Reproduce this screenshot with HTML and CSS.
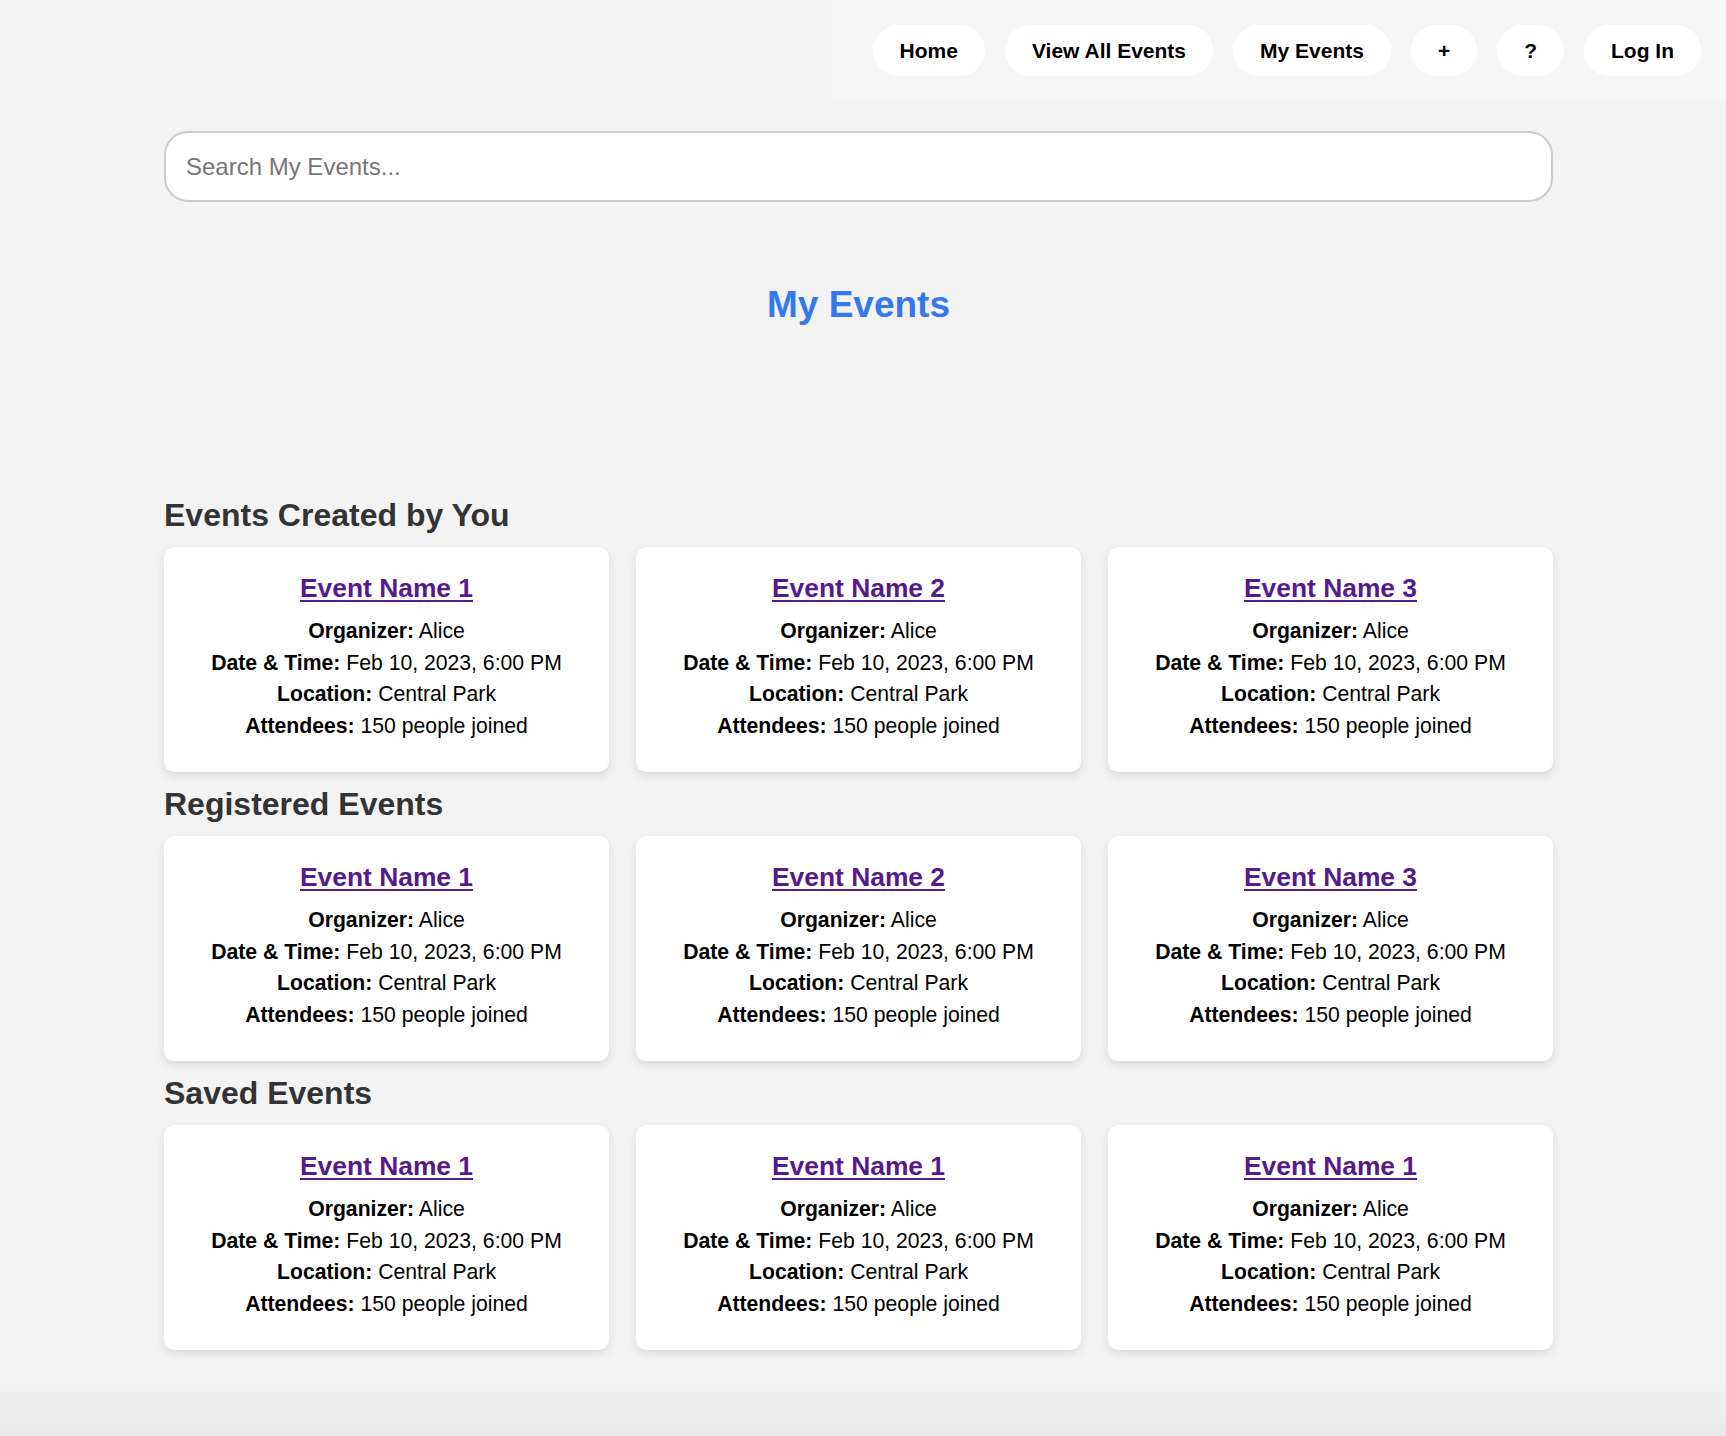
FILE: index.html
```html
<!DOCTYPE html>
<html lang="en">
<head>
<meta charset="utf-8">
<title>My Events</title>
<link rel="stylesheet" href="styles.css">
</head>
<body>
<header class="topbar">
  <nav class="nav">
    <a class="nav-btn" href="#">Home</a>
    <a class="nav-btn" href="#">View All Events</a>
    <a class="nav-btn" href="#">My Events</a>
    <a class="nav-btn" href="#">+</a>
    <a class="nav-btn" href="#">?</a>
    <a class="nav-btn" href="#">Log In</a>
  </nav>
</header>
<main class="main">
  <div class="search-wrap">
    <input class="search" type="text" placeholder="Search My Events...">
  </div>
  <h1 class="title">My Events</h1>

  <h2 class="section-title">Events Created by You</h2>
  <div class="grid">
    <div class="card">
      <a class="card-title" href="#">Event Name 1</a>
      <div class="line"><b>Organizer:</b> Alice</div>
      <div class="line"><b>Date &amp; Time:</b> Feb 10, 2023, 6:00 PM</div>
      <div class="line"><b>Location:</b> Central Park</div>
      <div class="line"><b>Attendees:</b> 150 people joined</div>
    </div>
    <div class="card">
      <a class="card-title" href="#">Event Name 2</a>
      <div class="line"><b>Organizer:</b> Alice</div>
      <div class="line"><b>Date &amp; Time:</b> Feb 10, 2023, 6:00 PM</div>
      <div class="line"><b>Location:</b> Central Park</div>
      <div class="line"><b>Attendees:</b> 150 people joined</div>
    </div>
    <div class="card">
      <a class="card-title" href="#">Event Name 3</a>
      <div class="line"><b>Organizer:</b> Alice</div>
      <div class="line"><b>Date &amp; Time:</b> Feb 10, 2023, 6:00 PM</div>
      <div class="line"><b>Location:</b> Central Park</div>
      <div class="line"><b>Attendees:</b> 150 people joined</div>
    </div>
  </div>

  <h2 class="section-title">Registered Events</h2>
  <div class="grid">
    <div class="card">
      <a class="card-title" href="#">Event Name 1</a>
      <div class="line"><b>Organizer:</b> Alice</div>
      <div class="line"><b>Date &amp; Time:</b> Feb 10, 2023, 6:00 PM</div>
      <div class="line"><b>Location:</b> Central Park</div>
      <div class="line"><b>Attendees:</b> 150 people joined</div>
    </div>
    <div class="card">
      <a class="card-title" href="#">Event Name 2</a>
      <div class="line"><b>Organizer:</b> Alice</div>
      <div class="line"><b>Date &amp; Time:</b> Feb 10, 2023, 6:00 PM</div>
      <div class="line"><b>Location:</b> Central Park</div>
      <div class="line"><b>Attendees:</b> 150 people joined</div>
    </div>
    <div class="card">
      <a class="card-title" href="#">Event Name 3</a>
      <div class="line"><b>Organizer:</b> Alice</div>
      <div class="line"><b>Date &amp; Time:</b> Feb 10, 2023, 6:00 PM</div>
      <div class="line"><b>Location:</b> Central Park</div>
      <div class="line"><b>Attendees:</b> 150 people joined</div>
    </div>
  </div>

  <h2 class="section-title">Saved Events</h2>
  <div class="grid">
    <div class="card">
      <a class="card-title" href="#">Event Name 1</a>
      <div class="line"><b>Organizer:</b> Alice</div>
      <div class="line"><b>Date &amp; Time:</b> Feb 10, 2023, 6:00 PM</div>
      <div class="line"><b>Location:</b> Central Park</div>
      <div class="line"><b>Attendees:</b> 150 people joined</div>
    </div>
    <div class="card">
      <a class="card-title" href="#">Event Name 1</a>
      <div class="line"><b>Organizer:</b> Alice</div>
      <div class="line"><b>Date &amp; Time:</b> Feb 10, 2023, 6:00 PM</div>
      <div class="line"><b>Location:</b> Central Park</div>
      <div class="line"><b>Attendees:</b> 150 people joined</div>
    </div>
    <div class="card">
      <a class="card-title" href="#">Event Name 1</a>
      <div class="line"><b>Organizer:</b> Alice</div>
      <div class="line"><b>Date &amp; Time:</b> Feb 10, 2023, 6:00 PM</div>
      <div class="line"><b>Location:</b> Central Park</div>
      <div class="line"><b>Attendees:</b> 150 people joined</div>
    </div>
  </div>
</main>
</body>
</html>
```

FILE: styles.css
```css
html {
  background: #e9e9e9;
}

body {
  margin: 0;
  min-height: 100vh;
  font-family: "Liberation Sans", Arial, Helvetica, sans-serif;
  color: #000;
  background: linear-gradient(to bottom, #f3f3f3 0, #f3f3f3 calc(100% - 70px), #e8e8e8 100%);
}

.topbar {
  display: flex;
  justify-content: flex-end;
}

.nav {
  display: flex;
  gap: 20px;
  padding: 25px 25px 26px 41px;
  background: #f6f6f6;
}

.nav-btn {
  display: block;
  background: #fff;
  border-radius: 26px;
  padding: 13px 27px;
  font-size: 21px;
  line-height: 25px;
  font-weight: bold;
  color: #000;
  text-decoration: none;
}

.main {
  margin: 29px 173px 0 164px;
  padding-bottom: 88px;
}

.search-wrap {
  display: flex;
}

.search {
  flex: 1;
  box-sizing: border-box;
  height: 71px;
  border: 2px solid #cccccc;
  border-radius: 24px;
  padding: 0 20px;
  font-family: "Liberation Sans", Arial, sans-serif;
  font-size: 24px;
  color: #333;
  background: #fff;
  outline: none;
}

.search::placeholder {
  color: #767676;
}

.title {
  margin: 81px 0 171px;
  text-align: center;
  font-size: 37px;
  line-height: 43px;
  font-weight: bold;
  color: #3478ec;
}

.section-title {
  margin: 14px 0;
  font-size: 32px;
  line-height: 36px;
  font-weight: bold;
  color: #333;
}

.grid {
  display: grid;
  grid-template-columns: repeat(3, 1fr);
  gap: 27px;
}

.card {
  display: flex;
  flex-direction: column;
  align-items: center;
  background: #fff;
  border-radius: 10px;
  box-shadow: 0 4px 10px rgba(0, 0, 0, 0.1);
  padding: 26px 20px 31px;
  text-align: center;
}

.card-title {
  font-size: 26.4px;
  line-height: 30px;
  font-weight: bold;
  color: #551a8b;
  text-decoration: underline;
  text-decoration-thickness: 2px;
  text-underline-offset: 3px;
  margin-bottom: 12px;
}

.line {
  font-size: 21.2px;
  line-height: 31.5px;
}
```
